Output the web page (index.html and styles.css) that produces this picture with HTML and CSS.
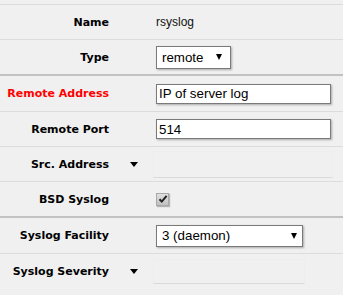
FILE: index.html
```html
<!DOCTYPE html>
<html lang="en">
<head>
<meta charset="UTF-8">
<title>Logging Action</title>
<link rel="stylesheet" href="styles.css">
</head>
<body>

<div class="form">

  <div class="row">
    <div class="label">Name</div>
    <div class="toggle"></div>
    <div class="value text">rsyslog</div>
  </div>

  <div class="row">
    <div class="label">Type</div>
    <div class="toggle"></div>
    <div class="value">
      <span class="select type-select"><select><option>remote</option></select></span>
    </div>
  </div>

  <!-- remote section -->
  <div class="row section">
    <div class="label required">Remote Address</div>
    <div class="toggle"></div>
    <div class="value"><input class="input" type="text" value="IP of server log"></div>
  </div>

  <div class="row">
    <div class="label">Remote Port</div>
    <div class="toggle"></div>
    <div class="value"><input class="input" type="text" value="514"></div>
  </div>

  <div class="row">
    <div class="label">Src. Address</div>
    <div class="toggle"><span class="down"></span></div>
    <div class="value"><div class="empty src-empty"></div></div>
  </div>

  <div class="row">
    <div class="label">BSD Syslog</div>
    <div class="toggle"></div>
    <div class="value">
      <span class="check">
        <svg width="10" height="10" viewBox="0 0 10 10"><path d="M1.5 5.2 L3.8 7.6 L8.6 1.8" fill="none" stroke="#222" stroke-width="2"/></svg>
      </span>
    </div>
  </div>

  <!-- syslog section -->
  <div class="row section">
    <div class="label">Syslog Facility</div>
    <div class="toggle"></div>
    <div class="value">
      <span class="select facility-select"><select><option>3 (daemon)</option></select></span>
    </div>
  </div>

  <div class="row">
    <div class="label">Syslog Severity</div>
    <div class="toggle"><span class="down"></span></div>
    <div class="value"><div class="empty severity-empty"></div></div>
  </div>

</div>

</body>
</html>
```

FILE: styles.css
```css
body { margin: 0; background: #f0f0f0; font-family: "Liberation Sans", Arial, sans-serif; color: #000; }
.form { padding-top: 4px; }
.row {
  display: grid;
  grid-template-columns: 109px 47px 1fr;
  align-items: center;
  height: 34px;
  border-top: 1px solid #dcdcdc;
}
.row.section { height: 35px; border-top: 2px solid #c2c2c2; }
.label {
  text-align: right;
  font-family: "DejaVu Sans", Verdana, sans-serif;
  font-weight: bold;
  font-size: 11px;
  white-space: nowrap;
}
.label.required { color: #ff0000; }
.toggle { position: relative; height: 100%; }
.down {
  position: absolute;
  left: 21px;
  top: 15px;
  width: 0;
  height: 0;
  border-left: 4px solid transparent;
  border-right: 4px solid transparent;
  border-top: 5px solid #000;
}
.value { display: flex; align-items: center; }
.text { font-size: 12px; color: #111; }
.input {
  box-sizing: border-box;
  width: 175px;
  height: 20px;
  margin: 0;
  padding: 0 2px;
  border: 1px solid #7a7a7a;
  background: #fff;
  box-shadow: 1px 1px 2px rgba(0,0,0,0.3);
  font-family: "Liberation Sans", Arial, sans-serif;
  font-size: 13.33px;
  color: #000;
  outline: none;
}
.select { position: relative; display: inline-block; }
.select select {
  -webkit-appearance: none;
  appearance: none;
  box-sizing: border-box;
  height: 23px;
  margin: 0;
  padding: 0 0 0 5px;
  border: 1px solid #7a7a7a;
  border-radius: 0;
  background: #fff;
  box-shadow: 1px 1px 2px rgba(0,0,0,0.3);
  font-family: "Liberation Sans", Arial, sans-serif;
  font-size: 13.33px;
  color: #000;
  outline: none;
}
.select::after {
  content: "";
  position: absolute;
  right: 9px;
  top: 8px;
  border-left: 3px solid transparent;
  border-right: 3px solid transparent;
  border-top: 6px solid #000;
  pointer-events: none;
}
.type-select select { width: 75px; }
.facility-select select { width: 147px; height: 22px; }
.facility-select::after { right: 6px; top: 8px; }
.empty {
  box-sizing: border-box;
  height: 27px;
  margin-left: -3px;
  border: 1px solid #ededed;
  border-bottom-color: #dadada;
}
.src-empty { width: 180px; }
.severity-empty { width: 152px; height: 25px; }
.check {
  box-sizing: border-box;
  display: inline-flex;
  align-items: center;
  justify-content: center;
  width: 13px;
  height: 13px;
  border: 1px solid #a8a8a8;
  background: linear-gradient(#e0e0e0, #c2c2c2);
  box-shadow: 1px 1px 1px rgba(0,0,0,0.25);
}
```
